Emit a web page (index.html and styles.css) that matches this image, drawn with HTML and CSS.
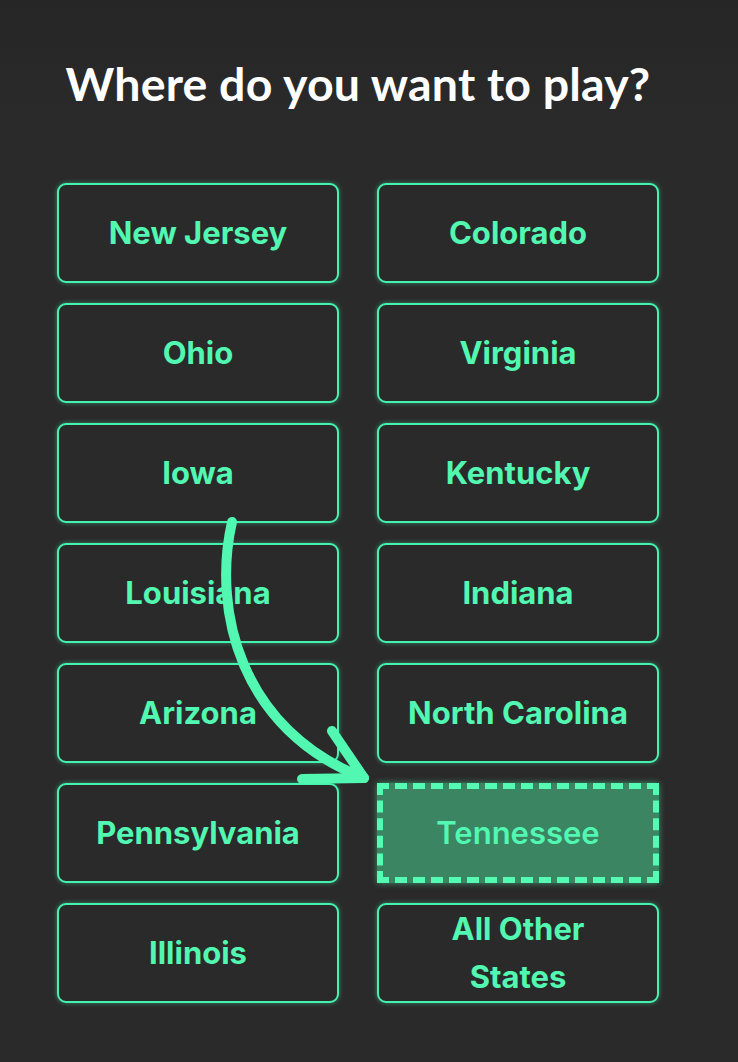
FILE: index.html
```html
<!DOCTYPE html>
<html>
<head>
<meta charset="utf-8">
<link rel="stylesheet" href="styles.css">
</head>
<body>
<main class="page">
  <h1 class="title">Where do you want to play?</h1>
  <div class="grid">
    <button class="state">New Jersey</button>
    <button class="state">Colorado</button>
    <button class="state">Ohio</button>
    <button class="state">Virginia</button>
    <button class="state">Iowa</button>
    <button class="state">Kentucky</button>
    <button class="state">Louisiana</button>
    <button class="state">Indiana</button>
    <button class="state">Arizona</button>
    <button class="state">North Carolina</button>
    <button class="state">Pennsylvania</button>
    <button class="state selected">Tennessee</button>
    <button class="state">Illinois</button>
    <button class="state">All Other<br>States</button>
  </div>
  <svg class="arrow" width="738" height="1062" viewBox="0 0 738 1062">
    <path d="M232 522 C 212 610, 240 730, 364 778" fill="none" stroke="#52f7b2" stroke-width="10" stroke-linecap="round"/>
    <path d="M332 731 L364 778 L302 779" fill="none" stroke="#52f7b2" stroke-width="10" stroke-linecap="round" stroke-linejoin="round"/>
  </svg>
</main>
</body>
</html>
```
FILE: styles.css
```css
html, body {
  margin: 0;
  padding: 0;
  background: #2a2a2a;
}
.page {
  position: relative;
  width: 738px;
  height: 1062px;
  box-sizing: border-box;
  padding-top: 54px;
  background: linear-gradient(#262626, #2a2a2a 120px);
}
.title {
  margin: 0;
  padding-right: 22px;
  text-align: center;
  color: #ffffff;
  font-family: "Lato", sans-serif;
  font-weight: 700;
  font-size: 46.5px;
  line-height: 58px;
  letter-spacing: 0.2px;
}
.grid {
  margin: 71px 0 0 57px;
  display: grid;
  grid-template-columns: 282px 282px;
  grid-auto-rows: 100px;
  column-gap: 38px;
  row-gap: 20px;
}
.state {
  box-sizing: border-box;
  margin: 0;
  padding: 0 6px;
  background: #2a2a2a;
  border: 2px solid #44f2b0;
  border-radius: 9px;
  box-shadow: 0 0 5px rgba(68, 242, 176, 0.45);
  color: #52f7b2;
  font-family: "Inter", "Roboto", sans-serif;
  font-weight: 700;
  font-size: 31px;
  line-height: 48px;
  text-align: center;
}
.state.selected {
  background: #3b8562;
  border: 6px dashed #55fbb3;
  border-radius: 0;
  font-weight: 600;
  box-shadow: 0 0 6px rgba(85, 251, 179, 0.5);
}
.arrow {
  position: absolute;
  left: 0;
  top: 0;
  pointer-events: none;
}
```
